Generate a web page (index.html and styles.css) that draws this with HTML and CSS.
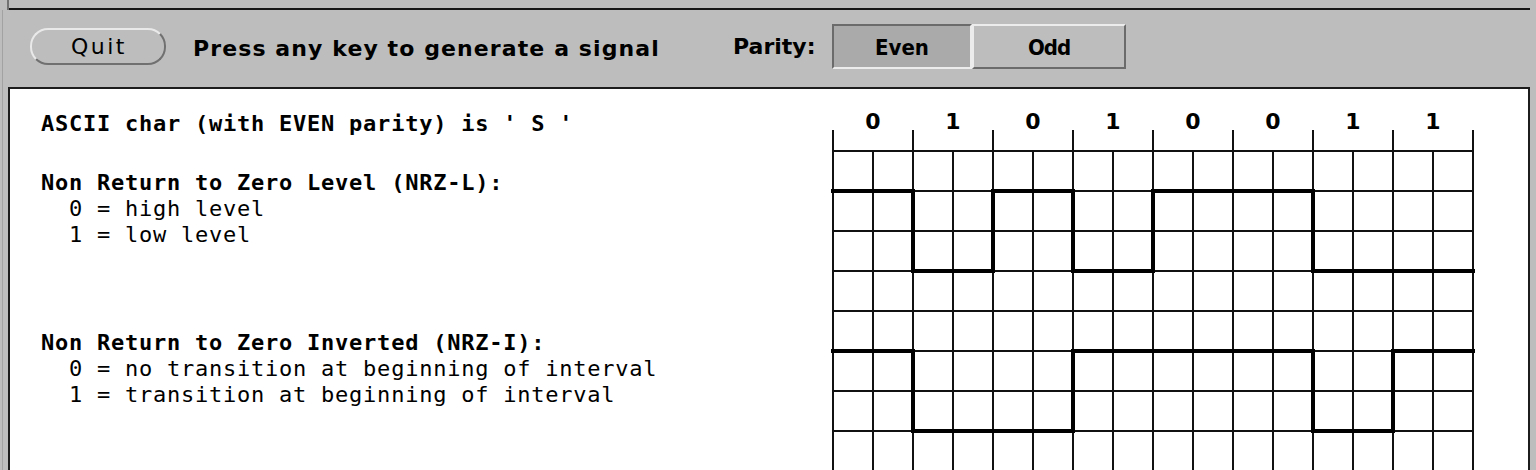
FILE: index.html
```html
<!DOCTYPE html>
<html>
<head>
<meta charset="utf-8">
<title>NRZ Signal</title>
<link rel="stylesheet" href="styles.css">
</head>
<body>
<div class="window">
  <div class="topstrip"><div class="tl"></div><div class="tm"></div><div class="tr"></div></div>
  <div class="main">
    <div class="toolbar">
      <button class="quit">Quit</button>
      <span class="hint">Press any key to generate a signal</span>
      <span class="parity-label">Parity:</span>
      <div class="seg">
        <button class="seg-btn on">Even</button>
        <button class="seg-btn off">Odd</button>
      </div>
    </div>
    <div class="panel">
      <div class="desc">
        <p class="line head">ASCII char (with EVEN parity) is ' S '</p>
        <div class="group g1">
          <p class="line head">Non Return to Zero Level (NRZ-L):</p>
          <p class="line">  0 = high level</p>
          <p class="line">  1 = low level</p>
        </div>
        <div class="group g2">
          <p class="line head">Non Return to Zero Inverted (NRZ-I):</p>
          <p class="line">  0 = no transition at beginning of interval</p>
          <p class="line">  1 = transition at beginning of interval</p>
        </div>
      </div>
      <svg class="chart" viewBox="0 0 680 381" width="680" height="381" xmlns="http://www.w3.org/2000/svg">
        <g class="bits" font-family="DejaVu Sans" font-weight="bold" font-size="22" text-anchor="middle" fill="#000">
          <text x="53" y="40">0</text>
          <text x="133" y="40">1</text>
          <text x="213" y="40">0</text>
          <text x="293" y="40">1</text>
          <text x="373" y="40">0</text>
          <text x="453" y="40">0</text>
          <text x="533" y="40">1</text>
          <text x="613" y="40">1</text>
        </g>
        <g stroke="#111" stroke-width="2" fill="none" shape-rendering="crispEdges">
          <path d="M13 41V62M93 41V62M173 41V62M253 41V62M333 41V62M413 41V62M493 41V62M573 41V62M653 41V62"/>
          <path d="M13 62V381M53 62V381M93 62V381M133 62V381M173 62V381M213 62V381M253 62V381M293 62V381M333 62V381M373 62V381M413 62V381M453 62V381M493 62V381M533 62V381M573 62V381M613 62V381M653 62V381"/>
          <path d="M12 62H654M12 102H654M12 142H654M12 182H654M12 222H654M12 262H654M12 302H654M12 342H654"/>
        </g>
        <g stroke="#000" stroke-width="4" fill="none" stroke-linejoin="miter" shape-rendering="crispEdges">
          <path d="M11 102H93V182H173V102H253V182H333V102H493V182H655"/>
          <path d="M11 262H93V342H253V262H493V342H573V262H655"/>
        </g>
      </svg>
    </div>
  </div>
</div>
</body>
</html>
```

FILE: styles.css
```css
html, body {
  margin: 0;
  padding: 0;
  height: 470px;
  overflow: hidden;
  background: #bdbdbd;
  color: #000;
  font-family: "DejaVu Sans", sans-serif;
}

.window {
  height: 470px;
}

.topstrip {
  display: flex;
  height: 10px;
}

.tl {
  width: 9px;
  box-sizing: border-box;
  border-right: 2px solid #727272;
}

.tm {
  flex: 1;
  border-bottom: 2px solid #161616;
}

.tr {
  width: 6px;
}

.main {
  display: flex;
  flex-direction: column;
  margin-left: 2px;
  border-left: 1px solid #a2a2a2;
  height: 460px;
}

.toolbar {
  display: flex;
  align-items: flex-start;
  height: 77px;
  flex: none;
}

.quit {
  margin: 18px 0 0 27px;
  width: 136px;
  height: 37px;
  box-sizing: border-box;
  border: 2px solid;
  border-color: #e9e9e9 #707070 #707070 #e9e9e9;
  border-radius: 18px;
  background: #bdbdbd;
  padding: 0 0 0 2px;
  font-family: "DejaVu Sans", sans-serif;
  font-size: 22px;
  line-height: 32px;
  letter-spacing: 2.5px;
  color: #000;
}

.hint {
  margin: 27px 0 0 27px;
  width: 540px;
  flex: none;
  font-weight: bold;
  font-size: 22px;
  line-height: 24px;
  letter-spacing: 1.1px;
  white-space: nowrap;
}

.parity-label {
  margin-top: 25px;
  width: 99px;
  flex: none;
  font-weight: bold;
  font-size: 22px;
  line-height: 24px;
  white-space: nowrap;
}

.seg {
  display: flex;
  margin-top: 14px;
}

.seg-btn {
  height: 45px;
  box-sizing: border-box;
  border: 2px solid;
  padding: 2px 0 0;
  margin: 0;
  line-height: 39px;
  font-family: "DejaVu Sans Condensed", "DejaVu Sans", sans-serif;
  font-weight: bold;
  font-size: 22px;
  text-align: center;
  color: #000;
}

.seg-btn.on {
  width: 140px;
  background: #aaaaaa;
  border-color: #6b6b6b #ececec #ececec #6b6b6b;
}

.seg-btn.off {
  width: 154px;
  background: #bdbdbd;
  border-color: #ececec #6b6b6b #6b6b6b #ececec;
  letter-spacing: -1px;
}

.panel {
  display: flex;
  flex: none;
  margin: 0 6px 0 5px;
  height: 383px;
  box-sizing: border-box;
  border: 2px solid #1c1c1c;
  border-bottom: none;
  background: #fff;
}

.desc {
  width: 810px;
  flex: none;
  box-sizing: border-box;
  padding: 22px 0 0 31px;
  font-family: "DejaVu Sans Mono", monospace;
  font-size: 22px;
  line-height: 26px;
  letter-spacing: 0.76px;
}

.line {
  margin: 0;
  white-space: pre;
}

.head {
  font-weight: bold;
}

.g1 {
  margin-top: 33px;
}

.g2 {
  margin-top: 82px;
}

.chart {
  display: block;
  flex: none;
  width: 680px;
  height: 381px;
}
```
